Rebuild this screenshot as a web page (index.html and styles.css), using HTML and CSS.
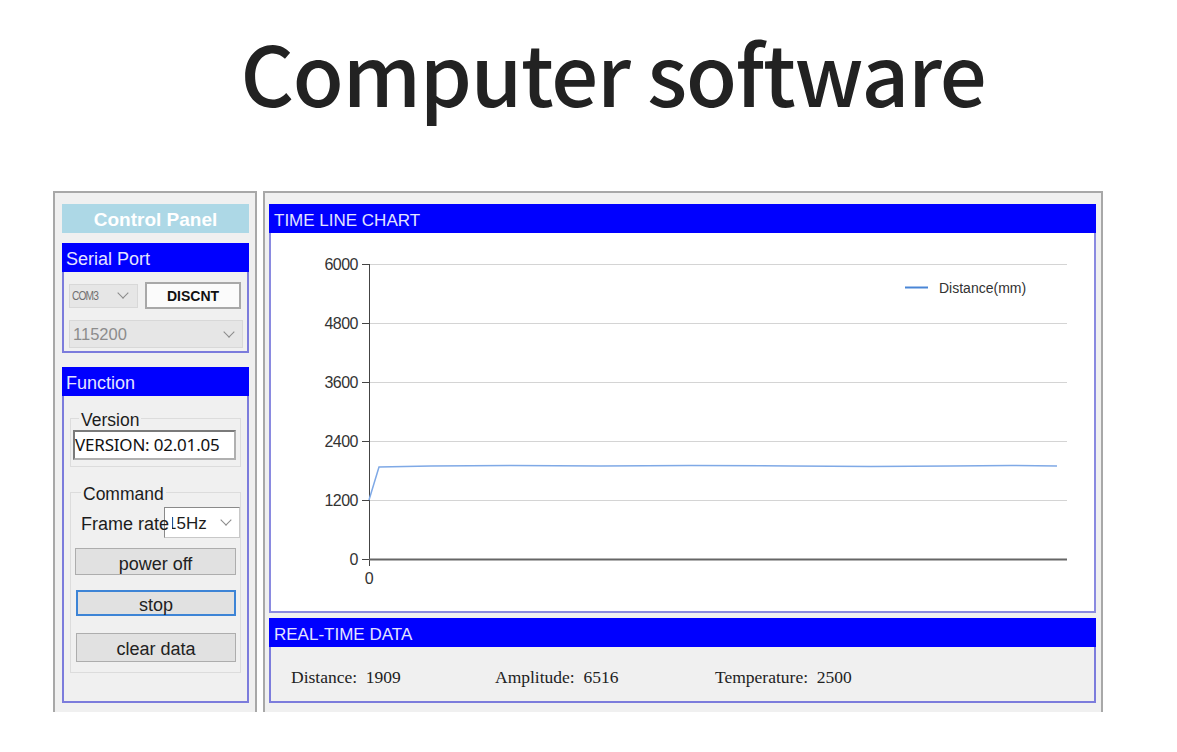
FILE: index.html
```html
<!DOCTYPE html>
<html lang="en">
<head>
<meta charset="utf-8">
<title>Computer software</title>
<link rel="stylesheet" href="styles.css">
</head>
<body>
<h1 class="title">Computer software</h1>
<div class="app">
  <div class="left">
    <div class="cp-title">Control Panel</div>
    <div class="group">
      <div class="ghead">Serial Port</div>
      <div class="gbody serial">
        <div class="row1">
          <div class="combo com disabled"><span class="val">COM3</span><span class="chev"></span></div>
          <div class="btn-disc">DISCNT</div>
        </div>
        <div class="combo baud disabled"><span class="val">115200</span><span class="chev"></span></div>
      </div>
    </div>
    <div class="group func">
      <div class="ghead">Function</div>
      <div class="gbody function">
        <fieldset class="fs version">
          <legend>Version</legend>
          <div class="textbox">VERSION: 02.01.05</div>
        </fieldset>
        <fieldset class="fs command">
          <legend>Command</legend>
          <div class="frow">
            <span class="flabel">Frame rate</span>
            <div class="combo rate"><span class="val"><span class="cut">15Hz</span></span><span class="chev"></span></div>
          </div>
          <div class="btn b-power">power off</div>
          <div class="btn b-stop">stop</div>
          <div class="btn b-clear">clear data</div>
        </fieldset>
      </div>
    </div>
  </div>
  <div class="right">
    <div class="ghead wide">TIME LINE CHART</div>
    <div class="chart-body">
      <svg class="chart" width="823" height="378" viewBox="0 0 823 378">
        <g class="grid" stroke="#d4d4d4" stroke-width="1">
          <line x1="98" y1="31.5" x2="796" y2="31.5"/>
          <line x1="98" y1="90.5" x2="796" y2="90.5"/>
          <line x1="98" y1="149.5" x2="796" y2="149.5"/>
          <line x1="98" y1="208.5" x2="796" y2="208.5"/>
          <line x1="98" y1="267.5" x2="796" y2="267.5"/>
        </g>
        <g stroke="#444" stroke-width="1">
          <line x1="91" y1="31.5" x2="98" y2="31.5"/>
          <line x1="91" y1="90.5" x2="98" y2="90.5"/>
          <line x1="91" y1="149.5" x2="98" y2="149.5"/>
          <line x1="91" y1="208.5" x2="98" y2="208.5"/>
          <line x1="91" y1="267.5" x2="98" y2="267.5"/>
          <line x1="91" y1="326.5" x2="98" y2="326.5"/>
          <line x1="98.5" y1="31" x2="98.5" y2="333"/>
        </g>
        <line x1="98" y1="326.5" x2="796" y2="326.5" stroke="#666" stroke-width="2"/>
        <g class="ylab" font-family="Liberation Sans, Arial, sans-serif" font-size="16" fill="#333" text-anchor="end" letter-spacing="-0.5">
          <text x="87" y="37">6000</text>
          <text x="87" y="96">4800</text>
          <text x="87" y="155">3600</text>
          <text x="87" y="214">2400</text>
          <text x="87" y="273">1200</text>
          <text x="87" y="332">0</text>
          <text x="98" y="351" text-anchor="middle">0</text>
        </g>
        <polyline fill="none" stroke="#7fa9e6" stroke-width="1.5" points="98,267 108,234 160,233 240,232.5 330,233 420,232.5 520,233 600,233.5 680,233 740,232.5 786,233"/>
        <line x1="634" y1="54.5" x2="657" y2="54.5" stroke="#4a86d6" stroke-width="2"/>
        <text x="668" y="60" font-family="Liberation Sans, Arial, sans-serif" font-size="14" fill="#333">Distance(mm)</text>
      </svg>
    </div>
    <div class="ghead wide data-head">REAL-TIME DATA</div>
    <div class="data-body">
      <span class="d d1">Distance:&nbsp;&nbsp;1909</span>
      <span class="d d2">Amplitude:&nbsp;&nbsp;6516</span>
      <span class="d d3">Temperature:&nbsp;&nbsp;2500</span>
    </div>
  </div>
</div>
</body>
</html>
```

FILE: styles.css
```css
html, body {
  margin: 0;
  padding: 0;
  background: #ffffff;
}

body {
  width: 1177px;
  height: 752px;
  overflow: hidden;
  font-family: "Liberation Sans", Arial, sans-serif;
}

.title {
  margin: 30px 0 0 0;
  padding-left: 49px;
  height: 83px;
  font-family: "Noto Sans CJK SC", "Noto Sans", sans-serif;
  font-weight: 500;
  font-size: 83px;
  line-height: 83px;
  color: #222222;
  text-align: center;
  letter-spacing: -1.2px;
}

.app {
  display: flex;
  gap: 6px;
  margin-top: 78px;
  padding-left: 53px;
  height: 521px;
}

.left {
  width: 204px;
  box-sizing: border-box;
  border: 2px solid #a8a8a8;
  border-bottom: none;
  background: #f0f0f0;
  padding: 11px 6px 0 7px;
}

.cp-title {
  height: 29px;
  line-height: 31px;
  background: #add8e6;
  color: #ffffff;
  font-weight: bold;
  font-size: 19px;
  text-align: center;
  margin-bottom: 10px;
}

.ghead {
  height: 29px;
  line-height: 33px;
  background: #0000ff;
  color: #e4e4ff;
  font-size: 18px;
  padding-left: 4px;
  overflow: hidden;
}

.gbody {
  border: 2px solid #7c7cdc;
  border-top: none;
  box-sizing: border-box;
}

.serial {
  height: 81px;
  padding: 10px 0 0 5px;
}

.row1 {
  display: flex;
  align-items: center;
  gap: 7px;
}

.combo {
  display: flex;
  align-items: center;
  box-sizing: border-box;
  position: relative;
}

.combo .chev {
  width: 7px;
  height: 7px;
  border-right: 1px solid #8a8a8a;
  border-bottom: 1px solid #8a8a8a;
  transform: rotate(45deg);
  margin-top: -5px;
}

.disabled {
  background: #e6e6e6;
  border: 1px solid #d8d8d8;
  color: #8c8c8c;
}

.com {
  width: 69px;
  height: 24px;
  padding: 0 10px 0 2px;
  justify-content: space-between;
}

.com .val {
  font-size: 12px;
  letter-spacing: -1px;
  transform: scaleX(0.85);
  transform-origin: left center;
  color: #707070;
}

.btn-disc {
  width: 96px;
  height: 27px;
  box-sizing: border-box;
  border: 2px solid #a8a8a8;
  background: #fbfbfb;
  font-weight: bold;
  font-size: 14px;
  color: #111;
  text-align: center;
  line-height: 25px;
}

.baud {
  width: 174px;
  height: 28px;
  margin-top: 11px;
  padding: 0 9px 0 3px;
  justify-content: space-between;
  font-size: 16.5px;
}

.func {
  margin-top: 14px;
}

.function {
  height: 307px;
  padding: 12px 6px 0 6px;
}

.fs {
  margin: 0;
  border: 1px solid #dcdcdc;
  padding: 2px 4px 6px 2px;
  min-width: 0;
}

.fs legend {
  font-size: 17.5px;
  line-height: 20px;
  height: 20px;
  padding: 2px 2px 0 2px;
  box-sizing: border-box;
  color: #1c1c1c;
  margin-left: 6px;
}

.textbox {
  height: 30px;
  box-sizing: border-box;
  background: #ffffff;
  border: 2px solid #7a7a7a;
  border-right-color: #b0b0b0;
  border-bottom-color: #b0b0b0;
  font-family: "Noto Sans", "DejaVu Sans", sans-serif;
  font-size: 17px;
  line-height: 26px;
  color: #111;
  padding-left: 0;
  letter-spacing: -0.2px;
  white-space: nowrap;
  overflow: hidden;
}

.command {
  margin-top: 15px;
  padding: 5px 4px 10px 4px;
}

.frow {
  display: flex;
  align-items: center;
  height: 31px;
  padding-left: 6px;
}

.flabel {
  width: 82px;
  flex-shrink: 0;
  padding-top: 3px;
  font-size: 18px;
  color: #1c1c1c;
  position: relative;
  z-index: 1;
  white-space: nowrap;
}

.rate {
  width: 76px;
  flex-shrink: 0;
  height: 31px;
  margin-left: 1px;
  background: #ffffff;
  border-top: 1px solid #8a8a8a;
  border-left: 1px solid #8a8a8a;
  border-right: 1px solid #c8c8c8;
  border-bottom: 1px solid #c8c8c8;
  padding-right: 9px;
  justify-content: space-between;
  overflow: hidden;
}

.rate .val {
  width: 40px;
  margin-left: 7px;
  padding-top: 2px;
  overflow: hidden;
  font-size: 17px;
  color: #1c1c1c;
  white-space: nowrap;
}

.rate .cut {
  margin-left: -5px;
}

.btn {
  box-sizing: border-box;
  background: #e1e1e1;
  border: 1px solid #adadad;
  font-size: 18px;
  color: #222;
  text-align: center;
}

.b-power {
  height: 27px;
  line-height: 31px;
  margin-top: 10px;
}

.b-stop {
  height: 26px;
  line-height: 27px;
  margin-top: 15px;
  margin-left: 1px;
  border: 2px solid #3d84d6;
}

.b-clear {
  height: 29px;
  line-height: 30px;
  margin-top: 17px;
  margin-left: 1px;
}

.right {
  width: 840px;
  box-sizing: border-box;
  border: 2px solid #a8a8a8;
  border-bottom: none;
  background: #f0f0f0;
  padding: 11px 5px 0 4px;
}

.wide {
  padding-left: 5px;
  font-size: 17px;
}

.chart-body {
  height: 380px;
  box-sizing: border-box;
  border: 2px solid #8a8ae0;
  border-top: none;
  background: #ffffff;
}

.chart {
  display: block;
}

.data-head {
  margin-top: 5px;
}

.data-body {
  height: 56px;
  box-sizing: border-box;
  border: 2px solid #7c7cdc;
  border-top: none;
  display: flex;
  align-items: center;
  padding: 6px 0 0 20px;
  font-family: "Liberation Serif", "Times New Roman", serif;
  font-size: 17.5px;
  color: #222;
  white-space: nowrap;
}

.d1 { width: 204px; }
.d2 { width: 220px; }
```
